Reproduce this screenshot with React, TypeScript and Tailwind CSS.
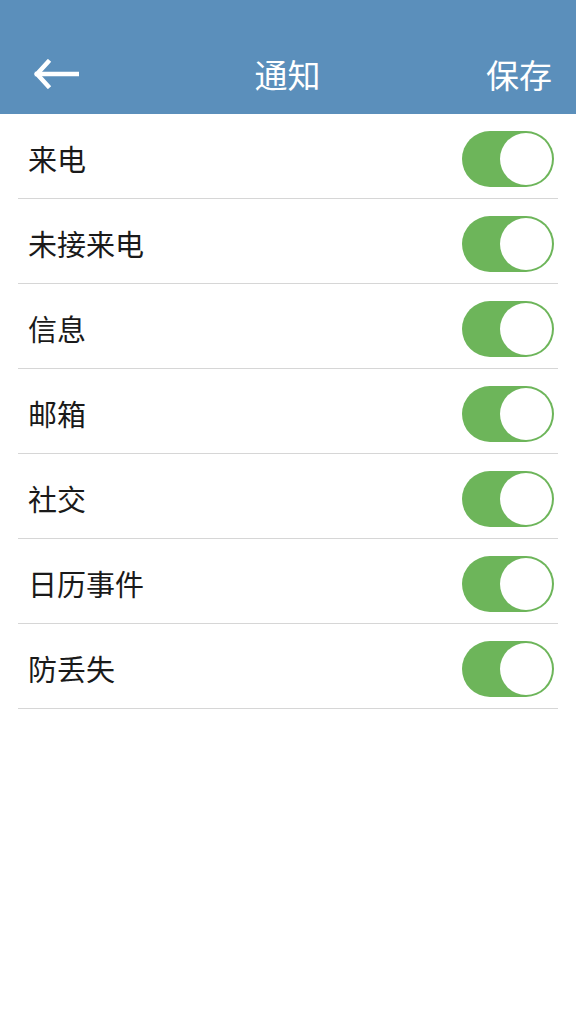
const items = ["来电", "未接来电", "信息", "邮箱", "社交", "日历事件", "防丢失"]

const Toggle = () => (
    <div className="flex h-[56px] w-[92px] items-center justify-end rounded-full bg-[#6db55a] p-[2px]">
        <div className="h-[52px] w-[52px] rounded-full bg-white" />
    </div>
)

export default function App() {
    return (
        <div className="min-h-screen w-[576px] bg-white font-['Noto_Sans_CJK_SC',sans-serif]">
            <header className="flex h-[114px] items-end bg-[#5b8fbb] pb-[22px] pl-[33px] pr-[24px] text-white">
                <div className="grid w-full grid-cols-[1fr_auto_1fr] items-center">
                    <svg width="46" height="30" viewBox="0 0 46 30" fill="none" stroke="white" strokeWidth="4.5" strokeLinecap="square">
                        <path d="M4 15 H44" />
                        <path d="M15 3 L4 15 L15 27" />
                    </svg>
                    <h1 className="-ml-[10px] text-[33px] leading-[36px]">通知</h1>
                    <button className="justify-self-end text-[33px] leading-[36px]">保存</button>
                </div>
            </header>
            <ul className="px-[18px]">
                {items.map((name) => (
                    <li key={name} className="flex h-[85px] items-center justify-between border-b border-[#d6d6d6] pl-[10px] pr-[4px] pt-[6px]">
                        <span className="text-[29px] text-[#1a1a1a]">{name}</span>
                        <Toggle />
                    </li>
                ))}
            </ul>
        </div>
    )
}
